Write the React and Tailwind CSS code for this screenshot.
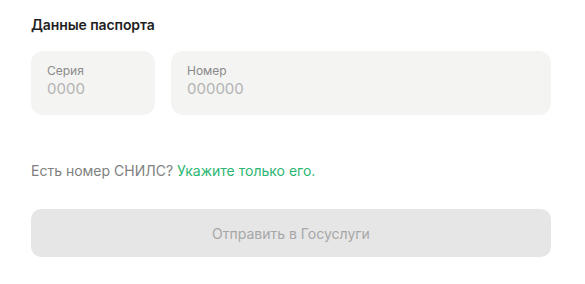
export default function App() {
  return (
    <div className="bg-white w-[585px] h-[284px] pl-[31px] pt-[16px]" style={{ fontFamily: "Inter, 'Noto Sans', sans-serif" }}>
      <div className="w-[520px]">
        <h2 className="text-[14px] font-semibold text-[#1f1f1f] leading-[18px] tracking-[-0.1px]">Данные паспорта</h2>

        <div className="flex gap-4 mt-[17px]">
          <div className="w-[124px] h-[64px] rounded-[12px] bg-[#f4f4f2] px-4 pt-[12px]">
            <div className="text-[12px] leading-[15px] text-[#8a8a8a]">Серия</div>
            <div className="text-[15px] leading-[20px] text-[#b3b3b3] mt-[1px]">0000</div>
          </div>
          <div className="flex-1 h-[64px] rounded-[12px] bg-[#f4f4f2] px-4 pt-[12px]">
            <div className="text-[12px] leading-[15px] text-[#8a8a8a]">Номер</div>
            <div className="text-[15px] leading-[20px] text-[#b3b3b3] mt-[1px]">000000</div>
          </div>
        </div>

        <p className="mt-[47px] text-[14px] leading-[18px] text-[#808080]">
          Есть номер СНИЛС? <span className="text-[#2bb673]">Укажите только его.</span>
        </p>

        <button className="mt-[29px] w-full h-[48px] rounded-[10px] bg-[#e6e6e6] text-[14px] text-[#a6a6a6]">
          Отправить в Госуслуги
        </button>
      </div>
    </div>
  );
}
